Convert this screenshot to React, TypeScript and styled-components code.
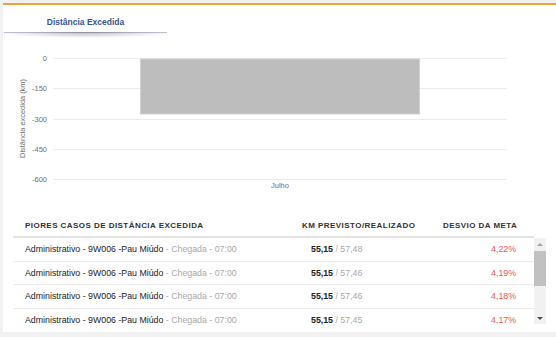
import styled, { createGlobalStyle } from 'styled-components';

const GlobalStyle = createGlobalStyle`
  html, body {
    margin: 0;
    padding: 0;
    background: #f1f1f1;
    font-family: "Liberation Sans", Arial, sans-serif;
  }
`;

const Card = styled.div`
  margin: 3px 0 0 3px;
  height: 327px;
  background: #fff;
  border-top: 2px solid #f0a233;
  display: flex;
  flex-direction: column;
`;

const TabBar = styled.div`
  display: flex;
  padding-left: 1px;
`;

const Tab = styled.div`
  position: relative;
  width: 163px;
  padding: 12px 0 5px;
  line-height: 10px;
  font-size: 8.5px;
  font-weight: bold;
  color: #34568b;
  text-align: center;
  border-bottom: 1px solid #c4c8d4;

  &::after {
    content: '';
    position: absolute;
    left: 0;
    right: 0;
    top: 100%;
    height: 6px;
    background: radial-gradient(ellipse 55% 100% at 50% 0%, rgba(0, 0, 0, 0.28), rgba(0, 0, 0, 0) 100%);
  }
`;

const ChartSvg = styled.svg`
  display: block;
  width: 553px;
  height: 173px;
  font-family: "Liberation Sans", Arial, sans-serif;
`;

const Table = styled.div`
  margin: 0 10px;
  display: flex;
  flex-direction: column;
`;

const COLS = '289px 141px 1fr';

const HeadRow = styled.div`
  display: grid;
  grid-template-columns: ${COLS};
  margin-right: 12px;
  padding: 15px 0 5px;
  line-height: 10px;
  border-bottom: 2px solid #e3e3e3;
`;

const HeadCell = styled.div<{ $pad?: number }>`
  padding-left: ${p => p.$pad ?? 0}px;
  font-size: 8px;
  font-weight: bold;
  letter-spacing: 0.45px;
  color: #333;
  white-space: nowrap;
`;

const Body = styled.div`
  display: flex;
  align-items: flex-start;
`;

const List = styled.div`
  flex: 1;
  min-width: 0;
`;

const Row = styled.div<{ $last?: boolean }>`
  display: grid;
  grid-template-columns: ${COLS};
  height: 22.5px;
  align-items: center;
  border-bottom: 1px solid ${p => (p.$last ? 'transparent' : '#ececec')};
  font-size: 8.8px;
  white-space: nowrap;
`;

const Route = styled.div`
  padding-left: 12px;
  color: #222;
`;

const Muted = styled.span`
  color: #a8a8a8;
`;

const Km = styled.div`
  padding-left: 9px;
  color: #222;

  b {
    font-weight: bold;
  }
`;

const Deviation = styled.div`
  text-align: right;
  padding-right: 18px;
  color: #e85757;
`;

const Scrollbar = styled.div`
  width: 12px;
  height: 86px;
  background: #f1f1f1;
  display: flex;
  flex-direction: column;
  flex-shrink: 0;
`;

const Arrow = styled.div<{ $dir: 'up' | 'down' }>`
  height: 12px;
  display: flex;
  align-items: center;
  justify-content: center;

  &::before {
    content: '';
    width: 0;
    height: 0;
    border-left: 3px solid transparent;
    border-right: 3px solid transparent;
    ${p =>
      p.$dir === 'up'
        ? 'border-bottom: 3px solid #a3a3a3;'
        : 'border-top: 3px solid #505050;'}
  }
`;

const Track = styled.div`
  flex: 1;
  padding-top: 1px;
`;

const Thumb = styled.div`
  height: 35px;
  background: #c1c1c1;
`;

const ticks = [
  { label: '0', y: 25.5 },
  { label: '-150', y: 55.5 },
  { label: '-300', y: 86.5 },
  { label: '-450', y: 116.5 },
  { label: '-600', y: 146.5 },
];

const rows = [
  { planned: '55,15', real: '57,48', dev: '4,22%' },
  { planned: '55,15', real: '57,46', dev: '4,19%' },
  { planned: '55,15', real: '57,46', dev: '4,18%' },
  { planned: '55,15', real: '57,45', dev: '4,17%' },
];

const Chart = () => (
  <ChartSvg viewBox="0 0 553 173">
    {ticks.map(t => (
      <g key={t.label}>
        <line x1={50} x2={504} y1={t.y} y2={t.y} stroke="#ebebeb" strokeWidth={1} />
        <text x={44} y={t.y + 2.5} textAnchor="end" fontSize={7.5} fill="#707070">
          {t.label}
        </text>
      </g>
    ))}
    <rect x={137.5} y={26} width={279} height={55} fill="#bdbdbd" stroke="#d2d2d2" strokeWidth={1} />
    <text x={277} y={154.5} textAnchor="middle" fontSize={7.5} fill="#707070">
      Julho
    </text>
    <text
      x={0}
      y={0}
      transform="translate(21.5 85.5) rotate(-90)"
      textAnchor="middle"
      fontSize={7.4}
      fill="#707070"
    >
      Distância excedida (km)
    </text>
  </ChartSvg>
);

export default function App() {
  return (
    <>
      <GlobalStyle />
      <Card>
        <TabBar>
          <Tab>Distância Excedida</Tab>
        </TabBar>
        <Chart />
        <Table>
          <HeadRow>
            <HeadCell $pad={12}>PIORES CASOS DE DISTÂNCIA EXCEDIDA</HeadCell>
            <HeadCell>KM PREVISTO/REALIZADO</HeadCell>
            <HeadCell>DESVIO DA META</HeadCell>
          </HeadRow>
          <Body>
            <List>
              {rows.map((r, i) => (
                <Row key={i} $last={i === rows.length - 1}>
                  <Route>
                    Administrativo - 9W006 -Pau Miúdo <Muted>- Chegada - 07:00</Muted>
                  </Route>
                  <Km>
                    <b>{r.planned}</b> <Muted>/ {r.real}</Muted>
                  </Km>
                  <Deviation>{r.dev}</Deviation>
                </Row>
              ))}
            </List>
            <Scrollbar>
              <Arrow $dir="up" />
              <Track>
                <Thumb />
              </Track>
              <Arrow $dir="down" />
            </Scrollbar>
          </Body>
        </Table>
      </Card>
    </>
  );
}
